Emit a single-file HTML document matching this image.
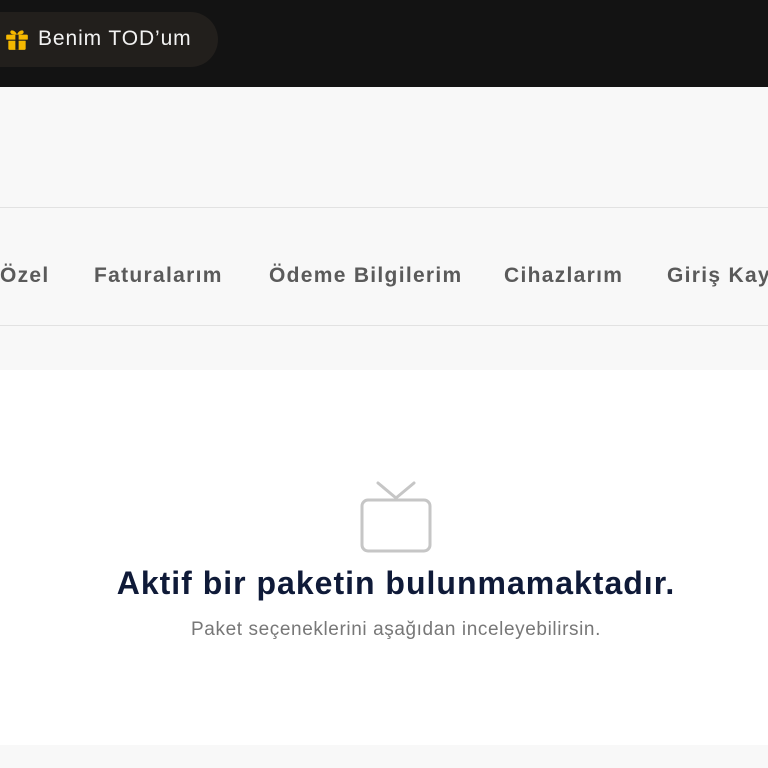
<!DOCTYPE html>
<html><head><meta charset="utf-8"><style>
*{margin:0;padding:0;box-sizing:border-box}
body{width:768px;height:768px;overflow:hidden;background:#fff;font-family:"Liberation Sans",sans-serif;position:relative}
.top{position:absolute;left:0;top:0;width:768px;height:87px;background:#131313}
.pill{position:absolute;left:0;top:12px;width:218px;height:55px;border-radius:0 28px 28px 0;background:#221f1c}
.pill span{position:absolute;left:38px;top:15px;color:#f2f2f2;font-size:21px;letter-spacing:0.9px}
.light{position:absolute;left:0;top:87px;width:768px;height:283px;background:#f8f8f8}
.l1{position:absolute;left:0;top:207px;width:768px;height:1px;background:#e2e2e2}
.l2{position:absolute;left:0;top:325px;width:768px;height:1px;background:#e2e2e2}
.navwrap{position:absolute;left:0;top:0;width:768px;height:768px;overflow:hidden}
.nav{position:absolute;top:264px;font-size:21px;font-weight:bold;color:#5a5a5a;letter-spacing:1.3px;white-space:nowrap}
.bot{position:absolute;left:0;top:745px;width:768px;height:23px;background:#f8f8f8}
h1{position:absolute;left:0;width:768px;top:565px;text-align:center;font-size:32px;color:#0f1a38;letter-spacing:1px;padding-left:24px}
p{position:absolute;left:0;width:768px;top:619px;text-align:center;font-size:19px;color:#777;letter-spacing:0.6px;padding-left:24px}
</style></head><body>
<div class="top"><div class="pill">
<svg style="position:absolute;left:4px;top:14px" width="26" height="26" viewBox="0 0 24 24"><g fill="#f5b800"><rect x="2" y="8" width="20" height="5" rx="1"/><rect x="4" y="13" width="16" height="9" rx="1"/><path d="M12 8C10 3 5 3 6 6.5 7 8 10 8 12 8ZM12 8C14 3 19 3 18 6.5 17 8 14 8 12 8Z"/></g><rect x="10.5" y="8" width="3" height="14" fill="#221f1c"/><rect x="2" y="12.6" width="20" height="1" fill="#221f1c"/></svg>
<span>Benim TOD’um</span></div></div>
<div class="light"></div>
<div class="l1"></div><div class="l2"></div>
<div class="navwrap">
<div class="nav" style="left:0">Özel</div>
<div class="nav" style="left:94px">Faturalarım</div>
<div class="nav" style="left:269px">Ödeme Bilgilerim</div>
<div class="nav" style="left:504px">Cihazlarım</div>
<div class="nav" style="left:667px;width:101px;overflow:hidden">Giriş Kayıtları</div>
</div>
<svg style="position:absolute;left:355px;top:478px" width="82" height="78" viewBox="0 0 82 78"><g fill="none" stroke="#c6c6c6" stroke-width="3" stroke-linecap="round" stroke-linejoin="round"><rect x="7" y="22" width="68" height="51" rx="6"/><path d="M23 5L41 20L59 5"/></g></svg>
<h1>Aktif bir paketin bulunmamaktadır.</h1>
<p>Paket seçeneklerini aşağıdan inceleyebilirsin.</p>
<div class="bot"></div>
</body></html>
